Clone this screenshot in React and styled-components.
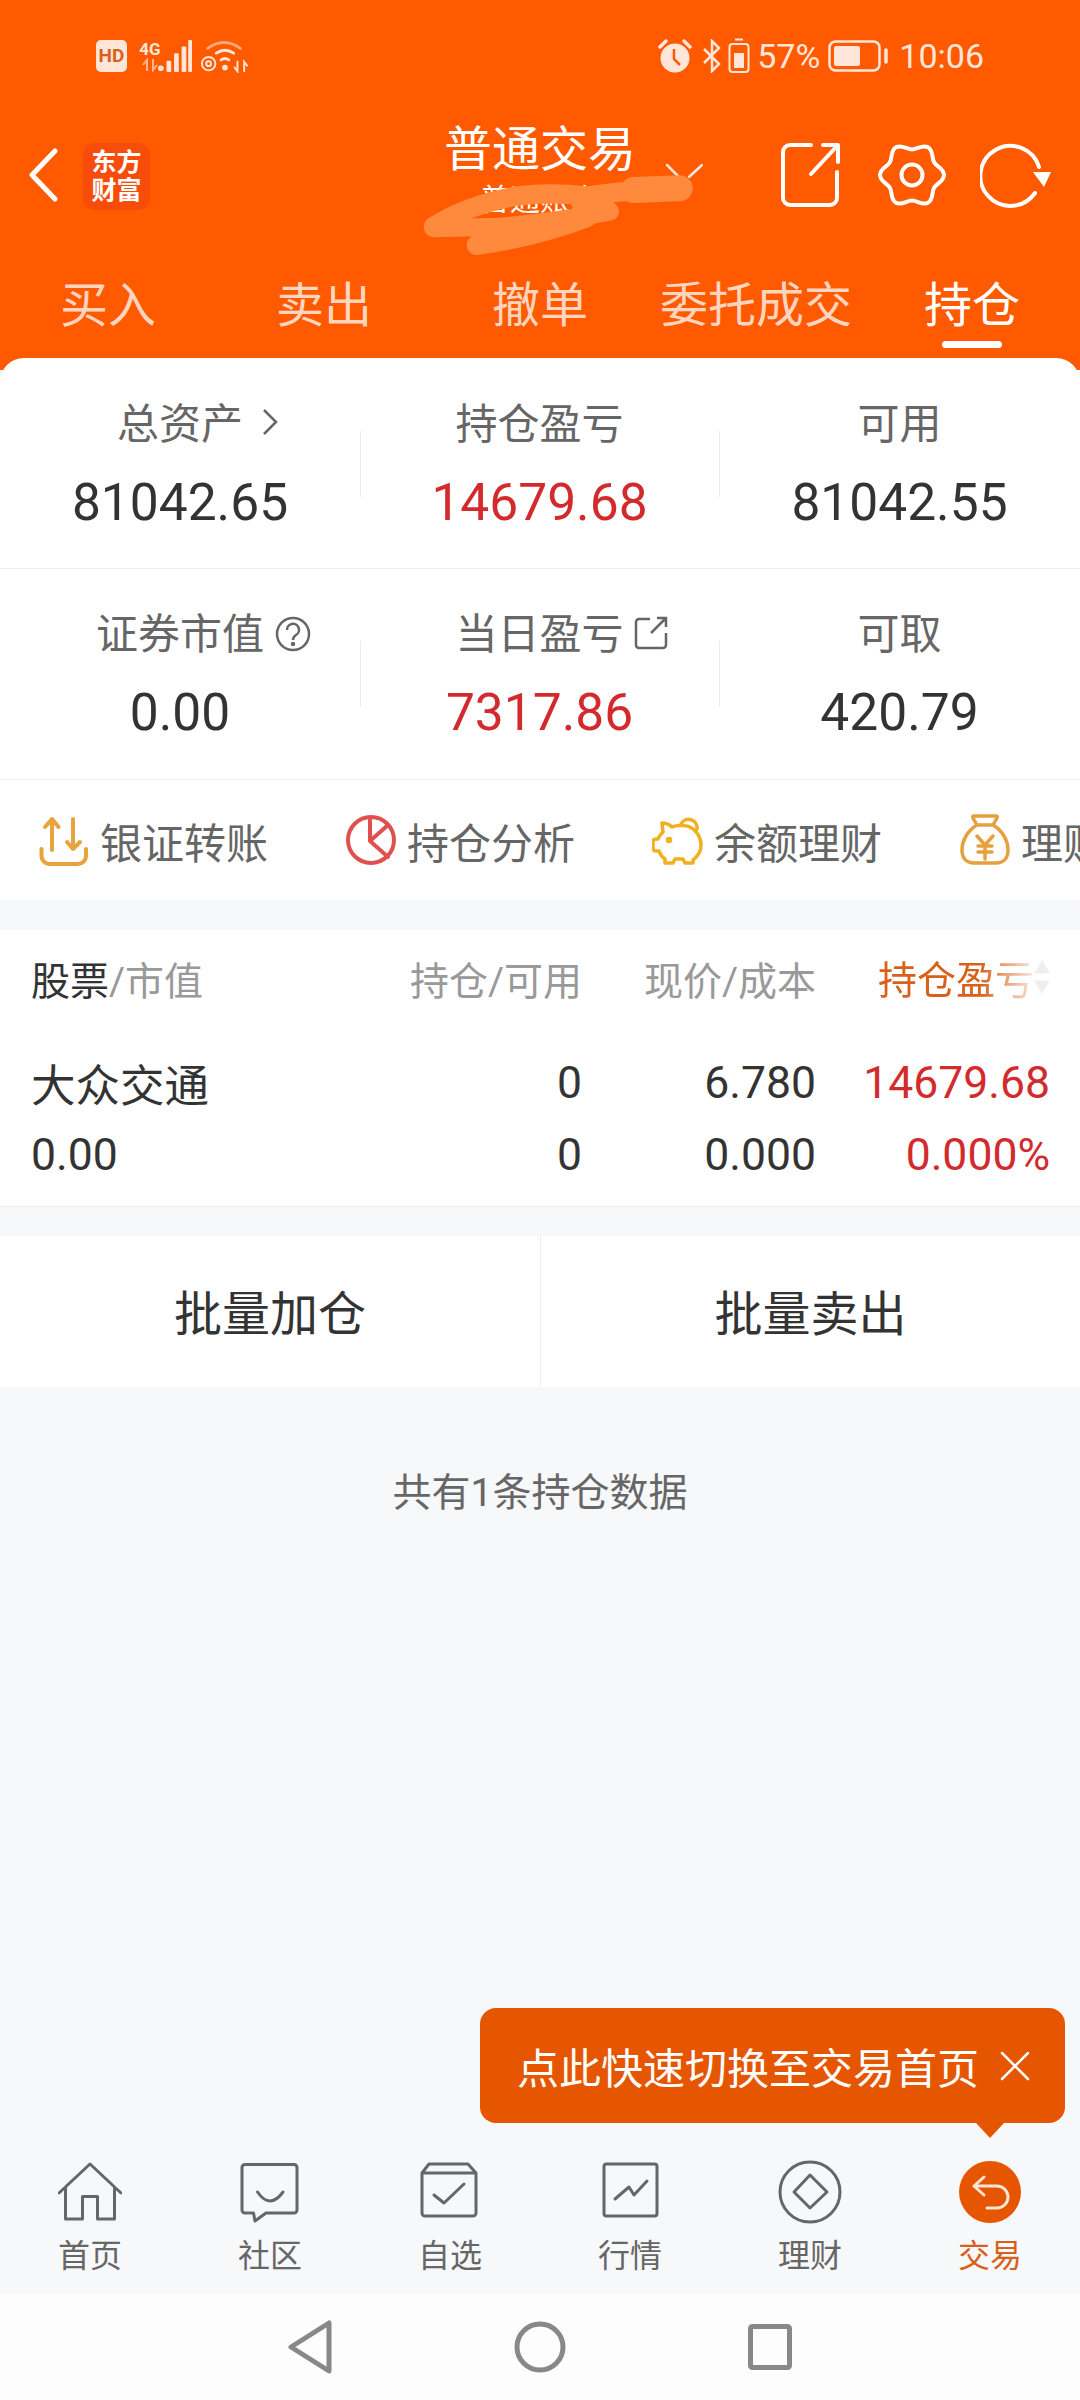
import React from "react";
import styled, { createGlobalStyle } from "styled-components";

const GlobalStyle = createGlobalStyle`
  html, body { margin: 0; padding: 0; background: #f7f8fa; }
  body { font-family: Roboto, "Noto Sans CJK SC", sans-serif; }
  * { box-sizing: border-box; }
`;

const Page = styled.div`
  width: 1080px;
  height: 2400px;
  display: flex;
  flex-direction: column;
  overflow: hidden;
  position: relative;
  background: #f7f8fa;
`;

const Header = styled.header`
  height: 370px;
  flex: none;
  background: #ff5a00;
  color: #fff;
`;

const StatusBar = styled.div`
  height: 110px;
  padding: 2px 96px 0 96px;
  display: flex;
  align-items: center;
  justify-content: space-between;
  color: #ffe6d8;
`;

const StatusGroup = styled.div`
  display: flex;
  align-items: center;
  gap: ${(p) => p.$gap || 8}px;
`;

const HdBadge = styled.span`
  width: 31px;
  height: 32px;
  border-radius: 5px;
  background: #ffe6d8;
  color: #d9601a;
  font: 700 19px/32px Roboto, sans-serif;
  text-align: center;
`;

const NetStack = styled.div`
  display: flex;
  flex-direction: column;
  align-items: center;
  width: 22px;
  margin-left: 4px;
`;

const NetLabel = styled.span`
  font: 700 17px/17px Roboto, sans-serif;
`;

const StatusText = styled.span`
  font-size: 34px;
  line-height: 36px;
  margin-left: ${(p) => p.$ml || 0}px;
`;

const NavRow = styled.div`
  height: 130px;
  display: grid;
  grid-template-columns: 1fr auto 1fr;
  align-items: center;
`;

const NavLeft = styled.div`
  display: flex;
  align-items: center;
  padding-left: 27px;
  gap: 24px;
`;

const Logo = styled.div`
  width: 67px;
  height: 67px;
  margin-top: 2px;
  border-radius: 12px;
  background: #f84c0a;
  color: #fff;
  font-size: 25px;
  line-height: 28px;
  font-weight: 700;
  text-align: center;
  padding-top: 6px;
`;

const TitleBlock = styled.div`
  position: relative;
  height: 130px;
  padding-top: 10px;
  text-align: center;
`;

const Title = styled.div`
  font-size: 48px;
  line-height: 60px;
`;

const SubTitle = styled.div`
  font-size: 30px;
  line-height: 40px;
`;

const TitleChevron = styled.svg`
  position: absolute;
  left: 221px;
  top: 53px;
`;

const Scribble = styled.svg`
  position: absolute;
  left: -44px;
  top: 20px;
`;

const NavRight = styled.div`
  display: flex;
  justify-content: flex-end;
  align-items: center;
  padding-right: 28px;
  gap: 33px;
`;

const Tabs = styled.nav`
  height: 100px;
  margin-top: 11px;
  display: grid;
  grid-template-columns: repeat(5, 1fr);
`;

const Tab = styled.div`
  position: relative;
  display: flex;
  align-items: center;
  justify-content: center;
  font-size: 48px;
  color: ${(p) => (p.$active ? "#fff" : "rgba(255,255,255,.75)")};
  ${(p) =>
    p.$active &&
    `&::after {
      content: "";
      position: absolute;
      left: 78px;
      bottom: 3px;
      width: 60px;
      height: 7px;
      border-radius: 4px;
      background: #fff;
    }`}
`;

const Panel = styled.section`
  margin-top: -12px;
  position: relative;
  background: #fff;
  border-radius: 24px 24px 0 0;
`;

const StatRow = styled.div`
  height: 211px;
  padding-top: ${(p) => p.$pt || 0}px;
  display: grid;
  grid-template-columns: 360px 359px 361px;
  align-items: center;
  border-bottom: 1px solid #eeeeee;
`;

const StatCell = styled.div`
  position: relative;
  text-align: center;
  ${(p) =>
    p.$divider &&
    `&::before {
      content: "";
      position: absolute;
      left: 0;
      top: 50%;
      height: 66px;
      margin-top: -36px;
      border-left: 1px solid #eaeaea;
    }`}
`;

const StatLabel = styled.div`
  display: inline-block;
  position: relative;
  font-size: 42px;
  line-height: 52px;
  color: #666;
`;

const LabelIcon = styled.svg`
  position: absolute;
  left: 100%;
  margin-left: ${(p) => p.$ml || 11}px;
  top: ${(p) => p.$top || 8}px;
`;

const StatValue = styled.div`
  margin-top: 20px;
  font-size: 51.5px;
  line-height: 64px;
  color: ${(p) => (p.$red ? "#d32a2e" : "#333")};
`;

const QuickBar = styled.div`
  height: 120px;
  display: flex;
  align-items: center;
  gap: 77px;
  padding-left: 38px;
  overflow: hidden;
  white-space: nowrap;
`;

const QuickItem = styled.div`
  flex: none;
  display: flex;
  align-items: center;
  gap: 10px;
  font-size: 42px;
  color: #666;
`;

const HoldingTable = styled.section`
  margin-top: 30px;
  background: #fff;
  border-bottom: 1px solid #eeeeee;
  height: 277px;
  padding-top: 20px;
`;

const TableRow = styled.div`
  display: grid;
  grid-template-columns: 1fr 203px 234px 234px;
  padding: 0 30px 0 31px;
  align-items: center;
  height: ${(p) => p.$h}px;
  margin-bottom: ${(p) => p.$mb || 0}px;
  font-size: ${(p) => p.$size}px;
  color: #333;
`;

const Cell = styled.div`
  text-align: ${(p) => (p.$left ? "left" : "right")};
  color: ${(p) => (p.$red ? "#d32a2e" : p.$grey ? "#999" : "inherit")};
`;

const MutedPart = styled.span`
  color: #999;
`;

const SortHead = styled.div`
  position: relative;
  height: 50px;
  line-height: 56px;
  text-align: left;
  padding-left: 62px;
`;

const SortText = styled.span`
  color: #d9601a;
  -webkit-mask-image: linear-gradient(to right, #000 65%, rgba(0,0,0,.15) 100%);
  mask-image: linear-gradient(to right, #000 65%, rgba(0,0,0,.15) 100%);
  display: inline-block;
`;

const SortArrows = styled.svg`
  position: absolute;
  right: 0;
  top: 7px;
`;

const BatchBar = styled.div`
  margin-top: 29px;
  height: 151px;
  display: grid;
  grid-template-columns: 540px 540px;
  background: #fff;
`;

const BatchButton = styled.div`
  display: flex;
  align-items: center;
  justify-content: center;
  padding-bottom: 4px;
  font-size: 48px;
  color: #333;
  border-left: ${(p) => (p.$divider ? "1px solid #eeeeee" : "none")};
`;

const Summary = styled.div`
  flex: 1;
  padding-top: 80px;
  text-align: center;
  font-size: 39px;
  line-height: 52px;
  color: #666;
`;

const Tooltip = styled.div`
  position: absolute;
  left: 480px;
  top: 2008px;
  width: 585px;
  height: 115px;
  border-radius: 16px;
  background: #e65500;
  color: #fff;
  display: flex;
  align-items: center;
  padding-left: 37px;
  gap: 20px;
  font-size: 42px;
  &::after {
    content: "";
    position: absolute;
    left: 496px;
    top: 115px;
    border-left: 14px solid transparent;
    border-right: 14px solid transparent;
    border-top: 15px solid #e65500;
  }
`;

const BottomNav = styled.nav`
  flex: none;
  height: 165px;
  display: grid;
  grid-template-columns: repeat(6, 180px);
  padding-top: 31px;
`;

const NavItem = styled.div`
  display: flex;
  flex-direction: column;
  align-items: center;
  gap: 12px;
  font-size: 32px;
  line-height: 40px;
  color: ${(p) => (p.$active ? "#d9601a" : "#666")};
`;

const SystemWrap = styled.div`
  flex: none;
  height: 106px;
  background: #fdfdfd;
  display: flex;
  justify-content: center;
  align-items: center;
`;

const SystemBar = styled.div`
  width: 504px;
  display: grid;
  grid-template-columns: repeat(3, 1fr);
  align-items: center;
  justify-items: center;
`;

const gearPath = (() => {
  const c = 34;
  const pts = [];
  for (let i = 0; i < 12; i++) {
    const a = ((i * 30 - 90) * Math.PI) / 180;
    pts.push({ a, r: i % 2 ? 32 : 25.5 });
  }
  const xy = (r, a) => `${(c + r * Math.cos(a)).toFixed(2)} ${(c + r * Math.sin(a)).toFixed(2)}`;
  const h = 0.2;
  let d = `M${xy(pts[0].r, pts[0].a)}`;
  pts.forEach((p, i) => {
    const n = pts[(i + 1) % 12];
    d += ` C${xy(p.r / Math.cos(h), p.a + h)} ${xy(n.r / Math.cos(h), n.a - h)} ${xy(n.r, n.a)}`;
  });
  return d + "Z";
})();

const Line = ({ w, h, color = "#666", sw = 3, children, fill = "none" }) => (
  <svg width={w} height={h} viewBox={`0 0 ${w} ${h}`} fill={fill} stroke={color} strokeWidth={sw} strokeLinecap="round" strokeLinejoin="round">
    {children}
  </svg>
);

const bottomItems = [
  {
    label: "首页",
    icon: <path d="M1 33L32 4l31 29M7.5 27v32h17V36.5h15V59h17V27" />,
  },
  {
    label: "社区",
    icon: (
      <>
        <path d="M7 4.5h49a3 3 0 0 1 3 3V50a3 3 0 0 1-3 3H28L17 61l-1.5-8H7a3 3 0 0 1-3-3V7.5a3 3 0 0 1 3-3z" />
        <path d="M19.5 32Q32 50 45 32" />
      </>
    ),
  },
  {
    label: "自选",
    icon: (
      <>
        <path d="M11 4h39l8 9v40a3 3 0 0 1-3 3H7a3 3 0 0 1-3-3V13zM4 13h54" />
        <path d="M16 35l10 8 20-19" />
      </>
    ),
  },
  {
    label: "行情",
    icon: (
      <>
        <rect x="6" y="4" width="53" height="52" rx="2.5" />
        <path d="M17 39l14-12 5 8 13-14" />
      </>
    ),
  },
  {
    label: "理财",
    icon: (
      <>
        <circle cx="32" cy="32" r="30" />
        <path d="M32 15l17 17-17 16-16-16z" />
      </>
    ),
  },
];

const quickIcons = {
  transfer: (
    <Line w={52} h={52} color="#e8a33d" sw={4}>
      <path d="M14 36V5M7 13l7-8 6.5 8M35 5v30M29 28l6 7 7-7M3.5 35v7a8 8 0 0 0 8 8H40a8 8 0 0 0 8-8v-7" />
    </Line>
  ),
  pie: (
    <Line w={52} h={52} color="#e0504f" sw={4}>
      <circle cx="26" cy="26" r="23" />
      <path d="M25 3.5V27l18-16M25 27l18 16" />
    </Line>
  ),
  pig: (
    <Line w={52} h={52} color="#f0b020" sw={3.5}>
      <path d="M10 9c5 0 8 2 10 4 4-2 14-2 18 0 6 3 11 10 11 18 0 7-4 12-8 15v3h-8l-2-4h-8l-2 4h-8v-4c-3-2-5-5-6-8H4c-2 0-3-1-3-3v-6c0-2 1-3 3-3h2c1-3 3-5 5-7z" />
      <path d="M29 10a8.5 8.5 0 0 1 16 5" />
      <circle cx="17" cy="26" r="1.5" />
    </Line>
  ),
  bag: (
    <Line w={52} h={52} color="#e5a040" sw={3.5}>
      <path d="M18 11C8 17 3 27 3 36c0 9 5 13 12 13h22c7 0 12-4 12-13 0-9-5-19-15-25M18 11L14 4q-1-2 1-2h22q2 0 1 2l-4 7zM18 22l8 9 8-9M19 32h14M19 38h14M26 31v14" />
    </Line>
  ),
};

const App = () => {
  return (
    <Page>
      <GlobalStyle />
      <Header>
        <StatusBar>
          <StatusGroup>
            <HdBadge>HD</HdBadge>
            <NetStack>
              <NetLabel>4G</NetLabel>
              <svg width="18" height="14" viewBox="0 0 18 14" stroke="#ffb48c" strokeWidth="2" fill="none">
                <path d="M6 13V2L2 7M12 1v11l4-5" />
              </svg>
            </NetStack>
            <svg width="34" height="34" viewBox="0 0 36 34" fill="#ffe6d8" style={{ marginLeft: -11 }}>
              <circle cx="3" cy="30" r="3" />
              <rect x="9" y="22" width="5" height="12" rx="1" />
              <rect x="17" y="14" width="5" height="20" rx="1" />
              <rect x="25" y="7" width="5" height="27" rx="1" />
              <rect x="32" y="0" width="4" height="34" rx="1" />
            </svg>
            <svg width="48" height="34" viewBox="0 0 50 34" fill="none" stroke="#ffe6d8" strokeWidth="3" strokeLinecap="round">
              <path d="M8 9Q25-3 42 9" stroke="#ffa878" />
              <path d="M17 14q9-6 18 0M22 21q4-3 8 0" />
              <circle cx="26" cy="29" r="3" fill="#ffe6d8" stroke="none" />
              <circle cx="9" cy="25" r="7" strokeWidth="2" />
              <circle cx="9" cy="25" r="2.5" strokeWidth="2" />
              <path d="M39 23v10l-3-4M46 33V23l3 4" strokeWidth="2" />
            </svg>
          </StatusGroup>
          <StatusGroup $gap={6}>
            <svg width="36" height="34" viewBox="0 0 36 34" fill="#ffe6d8">
              <circle cx="18" cy="19" r="14.5" />
              <path d="M3 8l6-6M33 8l-6-6" stroke="#ffe6d8" strokeWidth="3.5" strokeLinecap="round" />
              <path d="M17 10v10l6 6" stroke="#ff5a00" strokeWidth="2.5" fill="none" />
            </svg>
            <svg width="20" height="34" viewBox="0 0 20 34" fill="none" stroke="#ffe6d8" strokeWidth="2.5" style={{ marginLeft: 3 }}>
              <path d="M2 10l15 15-7 7V2l7 7L2 24" />
            </svg>
            <svg width="22" height="36" viewBox="0 0 22 36" fill="none" stroke="#ffe6d8" strokeWidth="2">
              <path d="M7 1.5h8" />
              <rect x="1.5" y="6" width="19" height="28" rx="3" />
              <rect x="6" y="15" width="10" height="15" fill="#ffe6d8" stroke="none" />
            </svg>
            <StatusText $ml={1}>57%</StatusText>
            <svg width="60" height="32" viewBox="0 0 60 32" fill="none" stroke="#ffe6d8" strokeWidth="2.5" style={{ marginLeft: 2 }}>
              <rect x="1.5" y="1.5" width="50" height="29" rx="6" />
              <rect x="6" y="6" width="26" height="20" rx="2" fill="#ffe6d8" stroke="none" />
              <path d="M58 10v12" strokeWidth="3.5" strokeLinecap="round" />
            </svg>
            <StatusText $ml={5}>10:06</StatusText>
          </StatusGroup>
        </StatusBar>

        <NavRow>
          <NavLeft>
            <Line w={32} h={54} color="#fff" sw={5}>
              <path d="M28 3L5 27l23 24" />
            </Line>
            <Logo>
              东方
              <br />
              财富
            </Logo>
          </NavLeft>
          <TitleBlock>
            <Title>普通交易</Title>
            <SubTitle>普通账户</SubTitle>
            <TitleChevron width="38" height="16" viewBox="0 0 38 16" fill="none" stroke="#ffe6d4" strokeWidth="2.5" strokeLinecap="round">
              <path d="M2 2l12 12M37 2L24 14" />
            </TitleChevron>
            <Scribble width="320" height="130" viewBox="0 0 960 390" fill="none" stroke="#ff8a3d" strokeLinecap="round" strokeLinejoin="round">
              <path d="M100 290Q200 225 350 198Q450 185 560 198Q700 178 850 172" strokeWidth="58" />
              <path d="M700 180L838 175" strokeWidth="78" />
              <path d="M540 215L625 240" strokeWidth="56" />
              <path d="M630 245Q450 278 300 290L100 295" strokeWidth="54" />
              <path d="M230 345Q400 322 560 262" strokeWidth="60" />
            </Scribble>
          </TitleBlock>
          <NavRight>
            <Line w={62} h={68} color="#fff" sw={4}>
              <path d="M31 4H10a7 7 0 0 0-7 7v46a7 7 0 0 0 7 7h40a7 7 0 0 0 7-7V31M31 33L58 4M43 4h15v17" />
            </Line>
            <svg width="68" height="68" viewBox="0 0 68 68" fill="none" stroke="#fff" strokeWidth="4" style={{ marginLeft: 3 }}>
              <path d={gearPath} />
              <circle cx="34" cy="34" r="10.5" />
            </svg>
            <svg width="72" height="68" viewBox="0 0 72 68" fill="none" stroke="#fff" strokeWidth="4" strokeLinecap="round" style={{ marginLeft: 1 }}>
              <path d="M55 52A30 30 0 1 1 59 26" />
              <path d="M53 31h18l-7 15z" fill="#fff" stroke="none" />
            </svg>
          </NavRight>
        </NavRow>

        <Tabs>
          <Tab>买入</Tab>
          <Tab>卖出</Tab>
          <Tab>撤单</Tab>
          <Tab>委托成交</Tab>
          <Tab $active>持仓</Tab>
        </Tabs>
      </Header>

      <Panel>
        <StatRow $pt={8}>
          <StatCell>
            <StatLabel>
              总资产
              <LabelIcon $ml={19} $top={9} width="17" height="28" viewBox="0 0 17 28" fill="none" stroke="#666" strokeWidth="2.5">
                <path d="M2 2l12 12L2 26" />
              </LabelIcon>
            </StatLabel>
            <StatValue>81042.65</StatValue>
          </StatCell>
          <StatCell $divider>
            <StatLabel>持仓盈亏</StatLabel>
            <StatValue $red>14679.68</StatValue>
          </StatCell>
          <StatCell $divider>
            <StatLabel>可用</StatLabel>
            <StatValue>81042.55</StatValue>
          </StatCell>
        </StatRow>
        <StatRow $pt={6}>
          <StatCell>
            <StatLabel>
              证券市值
              <LabelIcon $top={7} width="36" height="36" viewBox="0 0 36 36" fill="none" stroke="#666" strokeWidth="2.5">
                <circle cx="18" cy="18" r="16" />
                <path d="M12 14a6 6 0 1 1 9 5q-3 2-3 5" />
                <circle cx="18" cy="28" r="1" />
              </LabelIcon>
            </StatLabel>
            <StatValue>0.00</StatValue>
          </StatCell>
          <StatCell $divider>
            <StatLabel>
              当日盈亏
              <LabelIcon $ml={10} $top={7} width="34" height="34" viewBox="0 0 34 34" fill="none" stroke="#666" strokeWidth="2.5">
                <path d="M16 3H5a3 3 0 0 0-3 3v23a3 3 0 0 0 3 3h24a3 3 0 0 0 3-3V17M17 17L32 2M23 2h9v9" />
              </LabelIcon>
            </StatLabel>
            <StatValue $red>7317.86</StatValue>
          </StatCell>
          <StatCell $divider>
            <StatLabel>可取</StatLabel>
            <StatValue>420.79</StatValue>
          </StatCell>
        </StatRow>
        <QuickBar>
          <QuickItem>{quickIcons.transfer}银证转账</QuickItem>
          <QuickItem>{quickIcons.pie}持仓分析</QuickItem>
          <QuickItem>{quickIcons.pig}余额理财</QuickItem>
          <QuickItem>{quickIcons.bag}理财产品</QuickItem>
        </QuickBar>
      </Panel>

      <HoldingTable>
        <TableRow $h={50} $mb={50} $size={39}>
          <Cell $left>
            股票<MutedPart>/市值</MutedPart>
          </Cell>
          <Cell $grey>持仓/可用</Cell>
          <Cell $grey>现价/成本</Cell>
          <SortHead>
            <SortText>持仓盈亏</SortText>
            <SortArrows width="16" height="34" viewBox="0 0 14 30" fill="#efefef">
              <path d="M7 0l7 12H0zM7 30l7-12H0z" />
            </SortArrows>
          </SortHead>
        </TableRow>
        <TableRow $h={52} $mb={27} $size={44.5}>
          <Cell $left>大众交通</Cell>
          <Cell>0</Cell>
          <Cell>6.780</Cell>
          <Cell $red>14679.68</Cell>
        </TableRow>
        <TableRow $h={52} $size={44.5}>
          <Cell $left>0.00</Cell>
          <Cell>0</Cell>
          <Cell>0.000</Cell>
          <Cell $red>0.000%</Cell>
        </TableRow>
      </HoldingTable>

      <BatchBar>
        <BatchButton>批量加仓</BatchButton>
        <BatchButton $divider>批量卖出</BatchButton>
      </BatchBar>

      <Summary>共有1条持仓数据</Summary>

      <Tooltip>
        点此快速切换至交易首页
        <svg width="32" height="32" viewBox="0 0 32 32" stroke="#fff" strokeWidth="2.5" strokeLinecap="round">
          <path d="M3 3l26 26M29 3L3 29" />
        </svg>
      </Tooltip>

      <BottomNav>
        {bottomItems.map((item) => (
          <NavItem key={item.label}>
            <Line w={64} h={64}>
              {item.icon}
            </Line>
            {item.label}
          </NavItem>
        ))}
        <NavItem $active>
          <svg width="64" height="64" viewBox="0 0 64 64" fill="none" stroke="#ffe6d4" strokeWidth="3" strokeLinecap="round" strokeLinejoin="round">
            <circle cx="32" cy="32" r="31" fill="#e65500" stroke="none" />
            <path d="M26 17L16 26l10 9M16 26h23a11 11 0 0 1 0 22H29" />
          </svg>
          交易
        </NavItem>
      </BottomNav>

      <SystemWrap>
        <SystemBar>
          <svg width="44" height="54" viewBox="0 0 44 54" fill="none" stroke="#888" strokeWidth="5" strokeLinejoin="round" style={{ justifySelf: "start" }}>
            <path d="M41 3v48L3 27z" />
          </svg>
          <svg width="52" height="52" viewBox="0 0 52 52" fill="none" stroke="#888" strokeWidth="5">
            <circle cx="26" cy="26" r="23" />
          </svg>
          <svg width="44" height="46" viewBox="0 0 44 46" fill="none" stroke="#888" strokeWidth="5" strokeLinejoin="round" style={{ justifySelf: "end" }}>
            <rect x="2.5" y="2.5" width="39" height="41" rx="2" />
          </svg>
        </SystemBar>
      </SystemWrap>
    </Page>
  );
};

export default App;
